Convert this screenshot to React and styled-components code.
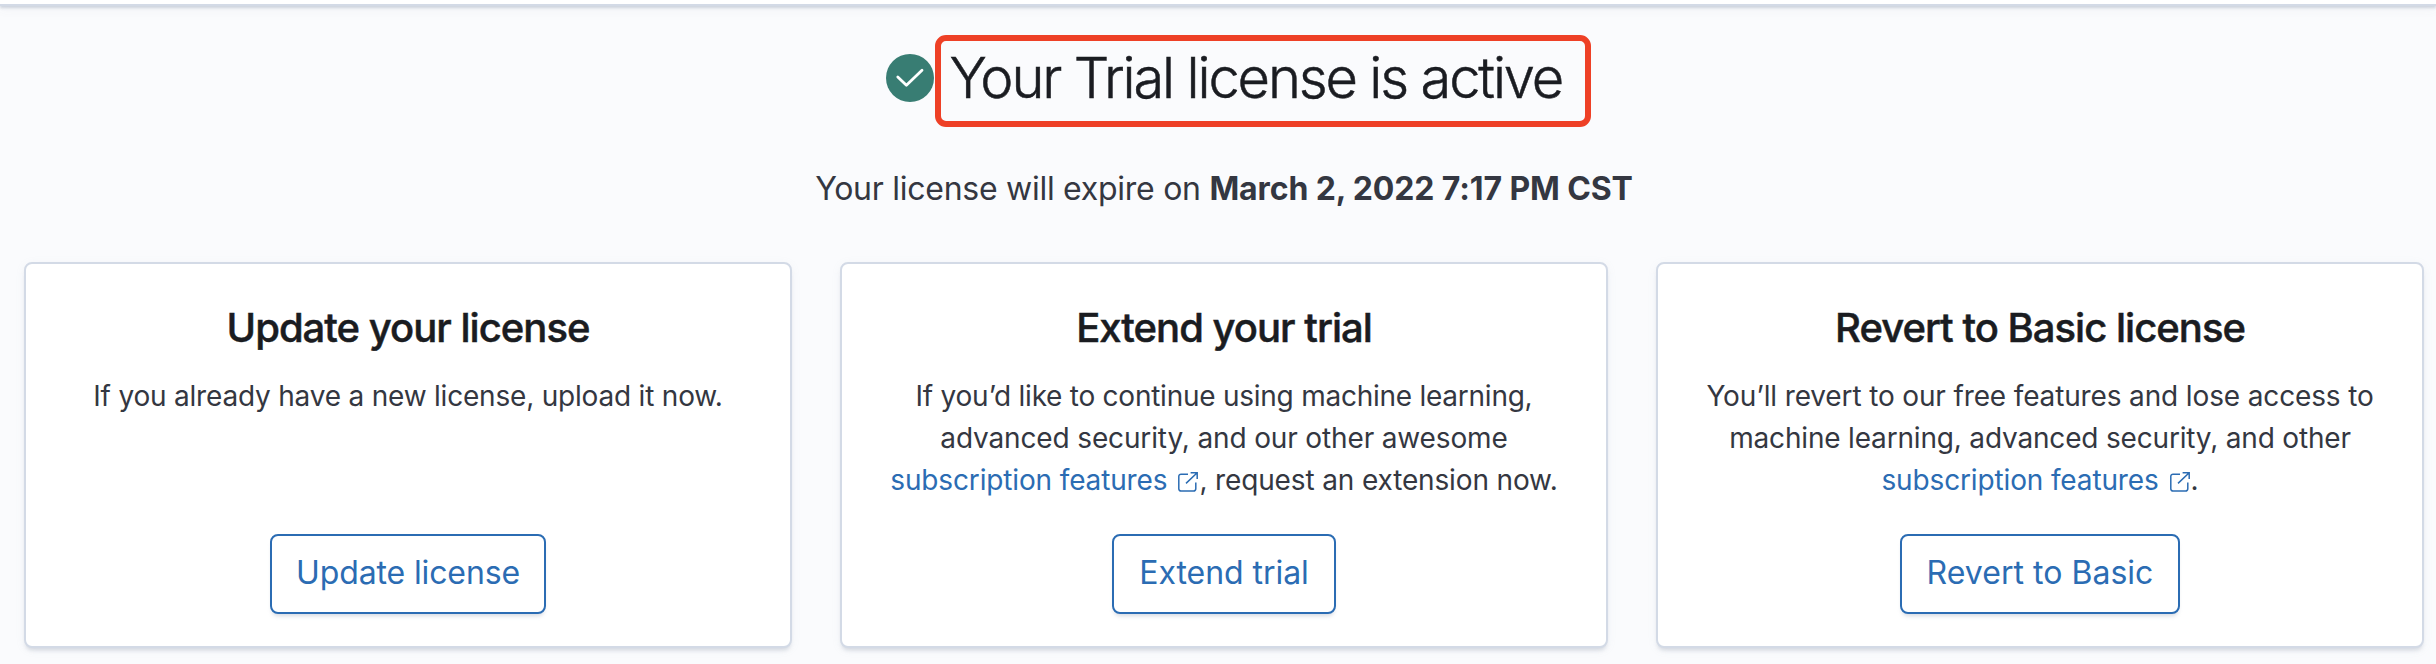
import React from "react";
import styled, { createGlobalStyle } from "styled-components";

const GlobalStyle = createGlobalStyle`
  * { box-sizing: border-box; }
  body {
    margin: 0;
    background: #fafbfd;
    color: #343741;
    font-family: Inter, "Liberation Sans", sans-serif;
    font-size: 28px;
    line-height: 42px;
    letter-spacing: -0.005em;
    font-optical-sizing: none;
    -webkit-font-smoothing: antialiased;
  }
`;

const Page = styled.main`
  height: 664px;
  overflow: hidden;
`;

const TopBar = styled.div`
  height: 6px;
  background: #fff;
  border-bottom: 2px solid #d3dae6;
  box-shadow: 0 2px 3px rgba(130, 142, 165, 0.35), 0 2px 12px rgba(100, 106, 119, 0.08);
`;

const Header = styled.header`
  display: flex;
  flex-direction: column;
  align-items: center;
  padding: 29px 0 0 12px;
`;

const TitleRow = styled.div`
  display: flex;
  align-items: center;
  gap: 1px;
  margin-left: 28px;
`;

const StatusIcon = styled.svg`
  width: 48px;
  height: 48px;
  margin-top: -6px;
`;

const Title = styled.h1`
  margin: 0;
  width: 656px;
  height: 92px;
  padding: 0 0 0 9px;
  border: 6px solid #ee4026;
  border-radius: 11px;
  color: #1a1c21;
  font-size: 56px;
  font-weight: 300;
  line-height: 74px;
  letter-spacing: -0.0385em;
  -webkit-text-stroke: 0.5px currentColor;
  white-space: nowrap;
`;

const Expiry = styled.p`
  margin: 38px 0 0;
  font-size: 32px;
  line-height: 48px;
  letter-spacing: -0.27px;

  strong {
    letter-spacing: -0.12px;
  }
`;

const CardGrid = styled.section`
  display: grid;
  grid-template-columns: repeat(3, 768px);
  gap: 48px;
  padding: 49px 12px 0 24px;
`;

const Card = styled.article`
  display: flex;
  flex-direction: column;
  align-items: center;
  height: 386px;
  padding: 40px 46px 32px;
  background: #fff;
  border: 2px solid #d3dae6;
  border-radius: 8px;
  box-shadow: 0 4px 4px -2px rgba(152, 162, 179, 0.4), 0 2px 10px rgba(152, 162, 179, 0.08);
  text-align: center;
`;

const CardTitle = styled.h2`
  margin: 0;
  color: #1a1c21;
  font-size: 40px;
  font-weight: 500;
  line-height: 48px;
  letter-spacing: -0.0245em;
  -webkit-text-stroke: 0.5px currentColor;
`;

const CardText = styled.p`
  margin: 23px 0 0;
  white-space: nowrap;
`;

const TextLine = styled.span`
  display: block;
  letter-spacing: ${(p) => p.$tracking || "-0.14px"};
`;

const Link = styled.a`
  color: #2b6cb3;
  text-decoration: none;
`;

const PopoutSvg = styled.svg`
  width: 24px;
  height: 24px;
  margin-left: 9px;
  margin-right: -1px;
  vertical-align: -3px;
`;

const Button = styled.button`
  width: ${(p) => p.$width}px;
  height: 80px;
  margin-top: auto;
  padding: 0 0 2px;
  background: #fff;
  border: 2px solid #2b6cb3;
  border-radius: 8px;
  box-shadow: 0 4px 4px -2px rgba(152, 162, 179, 0.4);
  color: #2b6cb3;
  font: inherit;
  font-size: 32px;
  font-optical-sizing: none;
  letter-spacing: ${(p) => p.$tracking || "-0.05px"};
`;

const CheckIcon = () => (
  <StatusIcon viewBox="0 0 48 48" fill="none">
    <circle cx="24" cy="24" r="24" fill="#387d73" />
    <path d="M11.8 22.9l8.6 8.3 15.6-14.9" stroke="#fff" strokeWidth="2.8" strokeLinecap="round" strokeLinejoin="round" />
  </StatusIcon>
);

const SubscriptionLink = () => (
  <Link>
    subscription features
    <PopoutSvg viewBox="0 0 24 24" fill="none" stroke="currentColor" strokeWidth="1.5">
      <path d="M12 5.2H5a2.2 2.2 0 0 0-2.2 2.2v12.4A2.2 2.2 0 0 0 5 22h12.6a2.2 2.2 0 0 0 2.2-2.2v-6.3" />
      <path d="M14.6 3.7h6.6v6.4M21.2 3.7L10 14.4" />
    </PopoutSvg>
  </Link>
);

export default function App() {
  return (
    <Page>
      <GlobalStyle />
      <TopBar />
      <Header>
        <TitleRow>
          <CheckIcon />
          <Title>Your Trial license is active</Title>
        </TitleRow>
        <Expiry>
          Your license will expire on <strong>March 2, 2022 7:17 PM CST</strong>
        </Expiry>
      </Header>
      <CardGrid>
        <Card>
          <CardTitle>Update your license</CardTitle>
          <CardText>
            <TextLine $tracking="-0.2px">If you already have a new license, upload it now.</TextLine>
          </CardText>
          <Button $width={276} $tracking="-0.12px">Update license</Button>
        </Card>
        <Card>
          <CardTitle>Extend your trial</CardTitle>
          <CardText>
            <TextLine $tracking="-0.25px">If you’d like to continue using machine learning,</TextLine>
            <TextLine>advanced security, and our other awesome</TextLine>
            <TextLine>
              <SubscriptionLink />, request an extension now.
            </TextLine>
          </CardText>
          <Button $width={224}>Extend trial</Button>
        </Card>
        <Card>
          <CardTitle>Revert to Basic license</CardTitle>
          <CardText>
            <TextLine>You’ll revert to our free features and lose access to</TextLine>
            <TextLine $tracking="-0.18px">machine learning, advanced security, and other</TextLine>
            <TextLine>
              <SubscriptionLink />.
            </TextLine>
          </CardText>
          <Button $width={280} $tracking="0.03px">Revert to Basic</Button>
        </Card>
      </CardGrid>
    </Page>
  );
}
